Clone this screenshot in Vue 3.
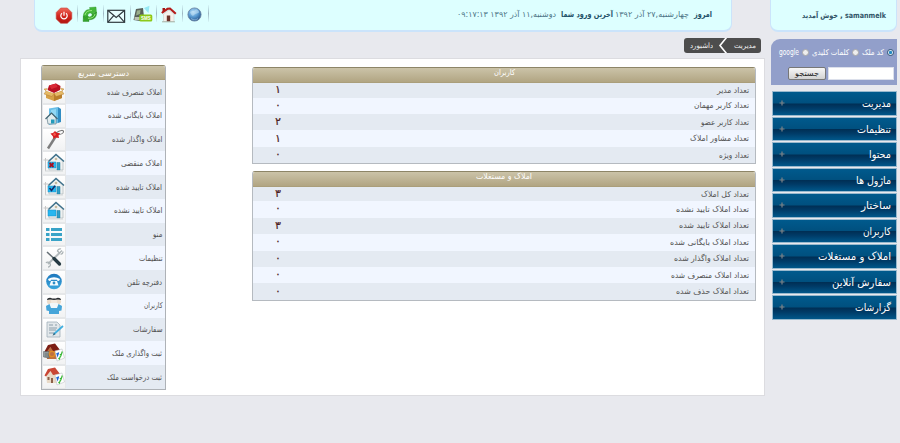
<script setup>
const vFit = {
  mounted(el, { value }) {
    const natural = el.getBoundingClientRect().width
    el.style.width = value + 'px'
    el.style.transform = `scaleX(${value / natural})`
  }
}

const menu = [
  ['مدیریت', 29], ['تنظیمات', 34], ['محتوا', 22], ['ماژول ها', 35], ['ساختار', 30],
  ['کاربران', 28], ['املاک و مستغلات', 73], ['سفارش آنلاین', 59], ['گزارشات', 36]
]

const quick = [
  ['املاک منصرف شده', 55, 'box'], ['املاک بایگانی شده', 54, 'archive'], ['املاک واگذار شده', 50.5, 'key'],
  ['املاک منقضی', 41, 'expired'], ['املاک تایید شده', 46, 'approved'], ['املاک تایید نشده', 48.5, 'pending'],
  ['منو', 9.5, 'list'], ['تنظیمات', 23.5, 'tools'], ['دفترچه تلفن', 35, 'phone'], ['کاربران', 18.5, 'users'],
  ['سفارشات', 29.5, 'orders'], ['ثبت واگذاری ملک', 50, 'transfer'], ['ثبت درخواست ملک', 55, 'request']
]

const tables = [
  { title: 'کاربران', w: 21, rows: [
    ['تعداد مدیر', 32, '۱'], ['تعداد کاربر مهمان', 55, '۰'], ['تعداد کاربر عضو', 48, '۲'],
    ['تعداد مشاور املاک', 59, '۱'], ['تعداد ویژه', 30, '۰']
  ] },
  { title: 'املاک و مستغلات', w: 56, rows: [
    ['تعداد کل املاک', 48, '۳'], ['تعداد املاک تایید نشده', 73, '۰'], ['تعداد املاک تایید شده', 70, '۳'],
    ['تعداد املاک بایگانی شده', 79, '۰'], ['تعداد املاک واگذار شده', 75, '۰'],
    ['تعداد املاک منصرف شده', 78, '۰'], ['تعداد املاک حذف شده', 73, '۰']
  ] }
]

const tools = ['power', 'refresh', 'mail', 'sms', 'home', 'globe']
</script>

<template>
  <div class="page">
    <svg class="defs" width="0" height="0">
      <defs>
        <radialGradient id="globeFill" cx=".4" cy=".3" r=".75">
          <stop offset="0" stop-color="#b4dcf8" /><stop offset=".5" stop-color="#5a9bd2" /><stop offset="1" stop-color="#204e86" />
        </radialGradient>
        <linearGradient id="redFill" x1="0" y1="0" x2="0" y2="1">
          <stop offset="0" stop-color="#ee6a5c" /><stop offset=".5" stop-color="#d3261e" /><stop offset="1" stop-color="#b01510" />
        </linearGradient>
        <linearGradient id="blueFill" x1="0" y1="0" x2="0" y2="1">
          <stop offset="0" stop-color="#1f78bd" /><stop offset="1" stop-color="#38a6dc" />
        </linearGradient>
      </defs>
    </svg>

    <div class="main">
      <header class="topbar">
        <nav class="tools">
          <span v-for="t in tools" :key="t" class="tool">
            <svg width="20" height="20" viewBox="0 0 20 20">
              <g v-if="t === 'power'">
                <path d="M6.700 3h6.600L17.800 7.500v6.400L13.300 18.300H6.700L2.200 13.900V7.500Z" fill="url(#redFill)" stroke="#c8453d" stroke-width=".6" />
                <path d="M8 8.200a3.200 3.200 0 1 0 4 0M10 6.700v4" fill="none" stroke="#fff" stroke-width="1.200" />
              </g>
              <g v-else-if="t === 'refresh'">
                <path d="M3.500 13.500C2.500 7.500 6 4 10 4.500L9.500 2.500 16 2 16.500 8 14 7.500 12.500 9.500 10.500 8C8.500 8 7.500 9.500 7.500 11.500Z" fill="#43b63a" stroke="#319629" stroke-width=".4" />
                <path d="M16.500 7C17.500 12 13 15.500 9 14.500L9 16.500 3 16.500 3.500 11 5.500 12 7.500 10.500 9 12C11 12 12 11 12.500 9Z" fill="#35a32d" stroke="#258a20" stroke-width=".4" />
                <path d="M5 10C5.500 7 8 5.500 12 5.500M8 13.300C12 13.500 14.500 12 15 9" stroke="#94e779" fill="none" />
              </g>
              <g v-else-if="t === 'mail'" fill="none" stroke="#303b40" stroke-width="1.200">
                <rect x="1.800" y="5.300" width="16.800" height="12" fill="#e8ffff" />
                <path d="M2 5.500 10.200 12.500 18.400 5.500M2 17.100 7.700 10.700M18.400 17.100 12.700 10.700" />
              </g>
              <g v-else-if="t === 'sms'">
                <path d="M3 4 10 3 11 12 7 16 .5 15Z" fill="#59605a" />
                <path d="M4 5.500 7.500 5 7 9 3 10.500Z" fill="#9aae8c" />
                <path d="M1.500 12h6v3h-6z" fill="#bcc2b3" />
                <path d="M11 3 16.500 .8 15.500 8 13.500 6Z" fill="#96e9f4" />
                <rect x="6.300" y="9.600" width="13" height="7" rx="1.500" fill="#8cc91a" />
                <text x="12.800" y="14.800" text-anchor="middle" class="sms-text">SMS</text>
              </g>
              <g v-else-if="t === 'home'">
                <path d="M4.500 9 10 5 15 9v7.500H4.500Z" fill="#f5f1eb" stroke="#bbb" stroke-width=".4" />
                <path d="M3.500 3h2.500v4H3.500z" fill="#a11616" />
                <path d="M2.800 8 8.500 3.800 11 3.500 16.800 8.700" fill="none" stroke="#b51c1a" stroke-width="2.100" />
                <path d="M7.800 10.500h3.400v6H7.800z" fill="#6d332a" />
                <path d="M3 16.800h13" stroke="#a8b3a5" />
              </g>
              <g v-else>
                <circle cx="9.500" cy="9.500" r="6.600" fill="url(#globeFill)" stroke="#6b83a0" stroke-width=".8" />
                <path d="M5 7c2-2 4 0 5-2s4 0 4 2-4 1-5 3-3 0-4-3Z" fill="#c7e4f6" opacity=".55" />
                <path d="M6 13.500c3 2 5 1.500 7 0" stroke="#acd1ee" stroke-width=".9" fill="none" opacity=".7" />
              </g>
            </svg>
          </span>
        </nav>
        <div class="dates">
          <span v-fit="18" class="fit bold">امروز</span>
          <span v-fit="74" class="fit gap-wide">چهارشنبه,۲۷ آذر ۱۳۹۲</span>
          <span v-fit="52" class="fit bold gap-thin">آخرین ورود شما</span>
          <span v-fit="99" class="fit gap-wide">دوشنبه,۱۱ آذر ۱۳۹۲ ۰۹:۱۷:۱۳</span>
        </div>
      </header>

      <div class="crumbs">
        <div class="crumb-pill">
          <span v-fit="22" class="fit">مدیریت</span>
          <svg width="10" height="15" viewBox="0 0 10 15"><path d="M8.500-.5 2 7.500 8.500 15.500" fill="none" stroke="#fff" stroke-width="1.600" /></svg>
          <span v-fit="23" class="fit">داشبورد</span>
        </div>
      </div>

      <section class="panel">
        <div class="quick">
          <h2 class="head quick-head"><span v-fit="51" class="fit">دسترسی سریع</span></h2>
          <div v-for="q in quick" :key="q[0]" class="quick-row">
            <span v-fit="q[1]" class="fit">{{ q[0] }}</span>
            <span class="pic">
              <svg width="22" height="22" viewBox="0 0 22 22">
                <g v-if="q[2] === 'box'">
                  <path d="M3 10 11 12.500 19 10V17L11 20 3 17Z" fill="#d6a047" />
                  <path d="M11 12.500V20L19 17V10Z" fill="#b97e2b" />
                  <path d="M4.500 9 6 4.500 13 2.500 17.500 5 17 9 11 12Z" fill="#b81022" />
                  <path d="M6 4.500 13 2.500 14.500 6 8.500 8Z" fill="#d92936" />
                  <path d="M3 10 1 13 9 15.500 11 12.500M19 10 21 13 13 15.500 11 12.500M4.500 7.500 1 8 3 10M17 7 21 8 19 10" fill="#e5b966" stroke="#a8722a" stroke-width=".4" />
                </g>
                <g v-else-if="q[2] === 'archive'">
                  <path d="M6 3.500 15 2V18L6 20Z" fill="#68bfe8" />
                  <path d="M15 2 18 4V17L15 18Z" fill="#328dc3" />
                  <path d="M8 5 13 4V13L8 15Z" fill="#91d7f4" />
                  <path d="M4 13 8.500 8 13 13V19H5Z" fill="#e1ecee" stroke="#65808c" stroke-width=".7" />
                  <path d="M2.500 14 8.500 8 14.500 14" fill="none" stroke="#456774" stroke-width="1.200" />
                  <path d="M8 14.500h3.500v4H8z" fill="#249bbb" />
                </g>
                <g v-else-if="q[2] === 'key'">
                  <path d="M5 19.500 13 7" stroke="#7e7e7e" stroke-width="2.500" />
                  <path d="M13 4C17 1 21 .5 20.500 3S16 5.500 13 6" fill="none" stroke="#777" stroke-width="1.100" />
                  <path d="M7.500 4.500 10 4 12 2 14 4 17 4 15.500 6.500 16 9 12.500 8.500 10.500 10 10 7.500Z" fill="#d91d20" />
                  <path d="M10 5 12 3.500 13 6 11 7Z" fill="#f16053" />
                </g>
                <g v-else-if="['expired', 'approved', 'pending'].includes(q[2])">
                  <path d="M5 9 13 3 20 9V18H6Z" fill="#eef1f1" stroke="#a5b0b2" stroke-width=".6" />
                  <path d="M5.500 9.500 13 2.500 21 9.500" fill="none" stroke="#3e718b" stroke-width="1.500" />
                  <circle cx="13" cy="7" r="1.300" fill="#c5bb9f" />
                  <path d="M14 10.500h3V18H14z" fill="#2d9fc9" stroke="#277b98" stroke-width=".5" />
                  <path d="M2.500 6v13M.5 8h5" stroke="#c6c6c6" stroke-width="1" />
                  <path d="M5 10h8v6H5z" fill="#26b6f0" stroke="#168ec4" stroke-width=".5" />
                  <path v-if="q[2] === 'expired'" d="m6.500 11 4 4M10.500 11 6.500 15" stroke="#a90f1e" stroke-width="1.800" />
                  <path v-else-if="q[2] === 'approved'" d="m6.500 12 2 2.500L12 9.800" stroke="#152a68" stroke-width="1.600" fill="none" />
                  <path d="M2 19H20" stroke="#d2d7d8" />
                </g>
                <path v-else-if="q[2] === 'list'" d="M3 4h3.500v3H3zM8 4h11v3H8zM3 9h3.500v3H3zM8 9h11v3H8zM3 14h3.500v3H3zM8 14h11v3H8z" fill="#39a3c7" />
                <g v-else-if="q[2] === 'tools'">
                  <path d="M5 17 16.500 6" stroke="#b3babd" stroke-width="2" />
                  <path d="M19 3.500 16.500 6 14.500 4C15 2 17 1.500 18 2M17.500 7C19 7.500 20 6 20 4.500M3 16C4 14.500 6 15 7 16.500S7 20 5 20" fill="none" stroke="#aab2b5" stroke-width="1.300" />
                  <path d="M4 5 11 11.500" stroke="#656f75" stroke-width="1.500" />
                  <path d="M11 11.500 16.500 17" stroke="#243942" stroke-width="3.300" stroke-linecap="round" />
                </g>
                <g v-else-if="q[2] === 'phone'">
                  <circle cx="11" cy="10.500" r="7.800" fill="url(#blueFill)" />
                  <path d="M5 8Q11 4.500 17 8L16 10 14 9.500V8.800H8V9.500L6 10Z" fill="#fff" />
                  <path d="M8 10h6l1.500 4.500H6.500Z" fill="#f6fcff" />
                  <circle cx="11" cy="12" r="1.400" fill="#2f8fc7" />
                </g>
                <g v-else-if="q[2] === 'users'">
                  <circle cx="6.500" cy="6.500" r="2.600" fill="#ecdccb" /><circle cx="15.500" cy="6.500" r="2.600" fill="#ecdccb" /><circle cx="11" cy="6.500" r="3" fill="#f4e8dc" />
                  <path d="M4 5C4 2.500 8 2 9 3.500L13 3.500C14 2 18 2.500 18 5L15 4.500 11 5 7 4.500Z" fill="#252b30" />
                  <path d="M7 8H15L14 14H8Z" fill="#f3f7f9" />
                  <path d="M3 11 6.500 9 8 13 14 13 15.500 9 19 11 18.500 15.500 16 16V19H6V16L3.500 15.500Z" fill="#46a5d9" />
                </g>
                <g v-else-if="q[2] === 'orders'">
                  <path d="M4 3H14L17 6V18H4Z" fill="#e2e7ea" stroke="#a1b0ba" stroke-width=".8" />
                  <path d="M6 6h4M12 6h2M6 9h8M6 11h7M6 14h5" stroke="#8294a3" stroke-width=".9" />
                  <path d="M20 7 11 15" stroke="#40afe0" stroke-width="1.800" />
                  <path d="m11 13.800-1.500 3 3-1.500Z" fill="#33677f" />
                </g>
                <g v-else>
                  <path d="M3 9 10 3 16 8V17H4Z" :fill="q[2] === 'request' ? '#e8dac8' : '#bd7041'" />
                  <path d="M1.500 9.500 5 3 12 1.500 17 8 10 9 7.500 5 3 10.500Z" :fill="q[2] === 'request' ? '#c94635' : '#7c1e14'" />
                  <path v-if="q[2] === 'transfer'" d="M.5 9.500H6V16L.5 15ZM2 12h4v2H2" fill="#91999b" stroke="#50585b" stroke-width=".5" />
                  <path v-else d="M4.500 11h2v3h-2M8 12h2v5H8" fill="#8d6049" />
                  <circle v-if="q[2] === 'transfer'" cx="9" cy="12" r="2.700" fill="none" stroke="#df8c26" stroke-width="1.300" />
                  <path d="M12 9 19 7 21.500 16 14 19Z" fill="#fff" stroke="#b4b9be" stroke-width=".5" />
                  <path d="m13.800 11 .8 2.500 1-3" stroke="#1b64d7" stroke-width="1.300" fill="none" />
                  <path d="m17 12 1 1.500 1.300-4M15.500 16l.8 1 1.200-3" stroke="#35b632" stroke-width="1.200" fill="none" />
                </g>
              </svg>
            </span>
          </div>
        </div>

        <div class="stats">
          <div v-for="t in tables" :key="t.title" class="table">
            <h2 class="head"><span v-fit="t.w" class="fit">{{ t.title }}</span></h2>
            <div v-for="r in t.rows" :key="r[0]" class="stat-row">
              <span v-fit="r[1]" class="fit">{{ r[0] }}</span>
              <span class="value">{{ r[2] }}</span>
            </div>
          </div>
        </div>
      </section>
    </div>

    <aside class="side">
      <div class="welcome">
        <span v-fit="41" class="fit">samanmelk</span>
        <span class="comma">,</span>
        <span v-fit="36" class="fit">خوش آمدید</span>
      </div>
      <div class="search">
        <div class="options">
          <i class="radio on"></i><span v-fit="22" class="fit">کد ملک</span>
          <i class="radio"></i><span v-fit="37" class="fit">کلمات کلیدی</span>
          <i class="radio"></i><span v-fit="20" class="fit">google</span>
        </div>
        <div class="query">
          <span class="field"></span>
          <span class="button"><span v-fit="24" class="fit">جستجو</span></span>
        </div>
      </div>
      <nav class="menu">
        <div v-for="m in menu" :key="m[0]" class="item">
          <span v-fit="m[1]" class="fit">{{ m[0] }}</span>
          <svg width="6" height="6" viewBox="0 0 6 6"><path d="M3 .5V5.500M.5 3H5.500" stroke="#7c8388" stroke-width="1.200" /></svg>
        </div>
      </nav>
    </aside>
  </div>
</template>

<style>
body { background: #e8e9ee; overflow: hidden; }
</style>

<style scoped>
.page { display: flex; width: 900px; height: 443px; overflow: hidden; background: #e8e9ee; font: 8px "DejaVu Sans", sans-serif; color: #505050; }
.page * { box-sizing: border-box; }
.defs { position: absolute; }
.fit { display: inline-block; flex: none; white-space: nowrap; transform-origin: right center; }
.main { width: 770px; flex: none; }
.topbar { display: flex; justify-content: space-between; width: 698px; height: 32px; margin-left: 34px; padding: 0 19px 0 17px; background: #dff; border: 1px solid #cbe4fb; border-width: 0 1px 2px; border-radius: 0 0 8px 8px; }
.tools { display: flex; padding-top: 5px; }
.tool { display: flex; width: 26.200px; height: 17px; padding-left: 2px; border-right: 1px solid; border-image: linear-gradient(#dff, #9fb9c4 50%, #dff) 1; }
.tool svg { flex: none; }
.sms-text { font: bold 4.500px "Liberation Sans", sans-serif; fill: #fff; }
.dates { display: flex; direction: rtl; height: 29px; align-items: center; color: #4c7385; font-size: 8px; }
.bold { font-weight: bold; color: #235168; }
.gap-wide { margin-right: 5px; }
.gap-thin { margin-right: 2px; }
.crumbs { display: flex; justify-content: flex-end; height: 26px; padding: 6px 9px 0 0; }
.crumb-pill { display: flex; direction: rtl; align-items: center; justify-content: space-between; width: 77px; height: 15px; padding: 0 5px 0 6px; border-radius: 3px; background: #4d4d4d; color: #eee; font-size: 7.500px; }
.crumb-pill svg { margin-right: 2px; }
.panel { display: flex; width: 745px; height: 338px; margin-left: 20px; padding: 6px 8px 0 20px; background: #fff; border: 1px solid #dcdce0; }
.quick { width: 125px; height: 325px; border: 1px solid #aeb2b7; border-top-color: #8d8567; border-radius: 3px 3px 0 0; direction: rtl; }
.head { display: flex; justify-content: center; height: 15px; margin: 0; font-size: 8px; line-height: 10px; font-weight: normal; color: #fff; background: linear-gradient(#cbc3a8, #b2a684 90%, #a69a76); border-radius: 2px 2px 0 0; }
.quick-head { height: 14.200px; line-height: 15px; }
.quick-row { display: flex; align-items: center; justify-content: space-between; height: 23.750px; padding-right: 3px; background: #e4eaf2; }
.quick-row:nth-child(odd) { background: #f1f6ff; }
.pic { display: flex; width: 24px; height: 23.750px; align-items: center; justify-content: center; background: linear-gradient(#fff, #f1f2f3); border: 1px solid #e5e7e9; }
.stats { width: 504px; margin-left: 86px; padding-top: 2px; }
.table { margin-bottom: 6.500px; border: 1px solid #b5bac0; border-top-color: #8d8567; border-radius: 3px 3px 0 0; direction: rtl; }
.stat-row { display: flex; align-items: center; justify-content: space-between; height: 16.450px; padding: 0 6px 0 20px; background: #e4eaf2; }
.stat-row:nth-child(2) { height: 14.500px; }
.stat-row:nth-child(odd) { background: #f1f6ff; }
.value { width: 10px; text-align: center; font-size: 11px; line-height: 12px; color: #4c1d22; -webkit-text-stroke: .2px #4c1d22; }
.side { width: 130px; flex: none; }
.welcome { display: flex; direction: rtl; align-items: center; width: 127px; height: 32px; padding-right: 10px; background: #dff; border: 1px solid #cbe4fb; border-width: 0 1px 2px; border-radius: 0 0 8px 8px; font-size: 7.500px; font-weight: bold; color: #315568; }
.comma { width: 7px; text-align: center; }
.search { direction: rtl; width: 126px; height: 46px; margin: 7px 0 0 1px; padding: 9px 3px 0; background: #929fca; border-radius: 9px 0 0 0; color: #fff; }
.options { display: flex; align-items: center; height: 9px; }
.radio { flex: none; width: 7px; height: 7px; margin: 0 0 0 3px; border: 1px solid #a8a8a8; border-radius: 50%; background: #eee; }
.fit + .radio { margin-right: 3px; }
.on { background: radial-gradient(#248ac2 35%, #e8f3f8 60%); border-color: #345777; }
.query { display: flex; margin-top: 10px; gap: 2px; }
.field { width: 66px; height: 13px; background: #fff; border: 1px solid #dce0eb; }
.button { display: flex; width: 38px; height: 13px; align-items: center; justify-content: center; background: linear-gradient(#f7f7f7, #d2d2d2); border: 1px solid #777; border-radius: 2px; color: #222; }
.menu { margin: 6px 0 0 2px; width: 125px; }
.item { display: flex; direction: rtl; align-items: center; justify-content: space-between; height: 24.500px; margin-bottom: 1px; padding: 0 5px 0 6px; border: 1px solid #98b9ce; background: linear-gradient(#005a8d 0%, #00507f 48%, #002f55 52%, #003b67 70%, #00578a); color: #fff; font-size: 10.500px; }
</style>
